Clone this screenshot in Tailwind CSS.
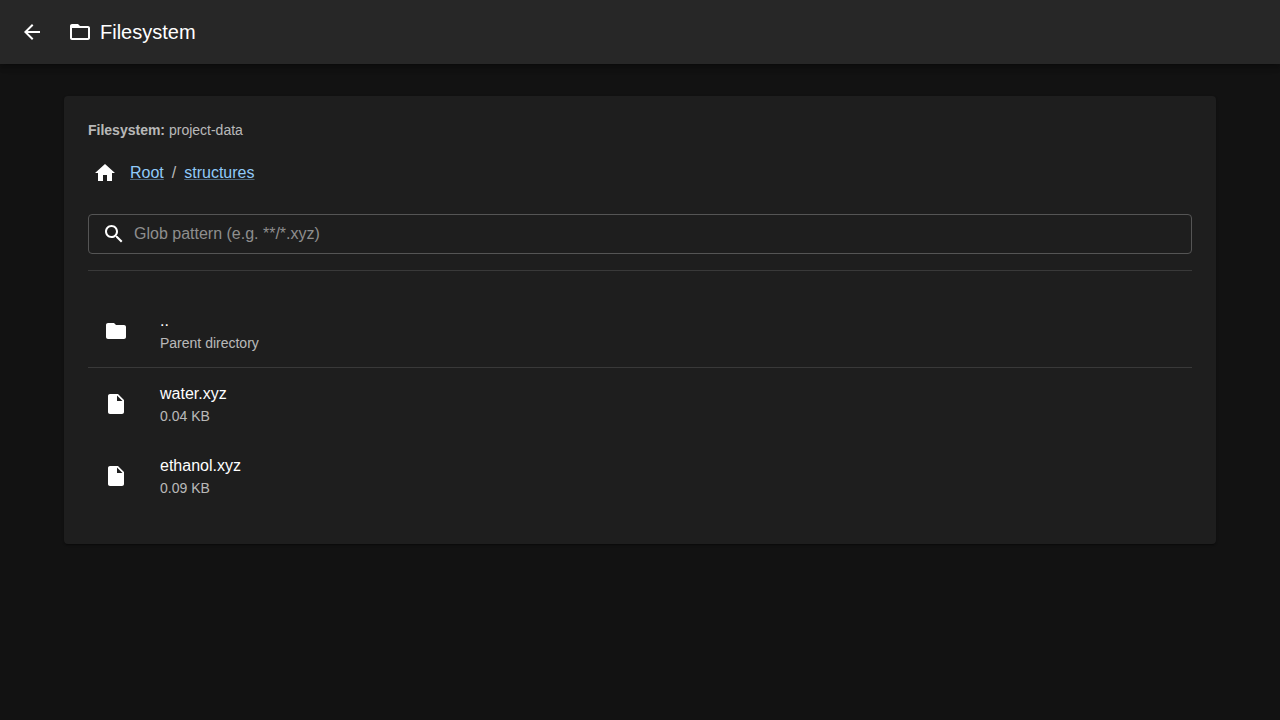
<!DOCTYPE html>
<html lang="en">
<head>
<meta charset="utf-8">
<meta name="viewport" content="width=device-width, initial-scale=1">
<title>Filesystem</title>
<script src="https://cdn.jsdelivr.net/npm/@tailwindcss/browser@4"></script>
</head>
<body class="min-h-screen bg-[#121212] font-['Liberation_Sans',Arial,sans-serif] text-base text-white">
<header class="relative flex h-16 items-center bg-[#272727] px-3 shadow-[0_2px_4px_-1px_rgba(0,0,0,0.2),0_4px_5px_0_rgba(0,0,0,0.14),0_1px_10px_0_rgba(0,0,0,0.12)]">
  <button type="button" aria-label="Back" class="mr-4 rounded-full p-2">
    <svg class="size-6 fill-current" viewBox="0 0 24 24"><path d="M20 11H7.83l5.59-5.59L12 4l-8 8 8 8 1.41-1.41L7.83 13H20v-2z"/></svg>
  </button>
  <h1 class="flex items-center gap-2 text-xl leading-8">
    <svg class="size-6 fill-current" viewBox="0 0 24 24"><path d="M20 6h-8l-2-2H4c-1.1 0-1.99.9-1.99 2L2 18c0 1.1.9 2 2 2h16c1.1 0 2-.9 2-2V8c0-1.1-.9-2-2-2zm0 12H4V8h16v10z"/></svg>
    Filesystem
  </h1>
</header>
<main class="mx-auto max-w-[1200px] px-6 py-8">
  <section class="rounded bg-[#1e1e1e] p-6 shadow-[0_2px_1px_-1px_rgba(0,0,0,0.2),0_1px_1px_0_rgba(0,0,0,0.14),0_1px_3px_0_rgba(0,0,0,0.12)]">
    <p class="mb-4 text-sm leading-5 text-white/70"><strong>Filesystem:</strong> project-data</p>
    <nav aria-label="Breadcrumb" class="mb-6 flex items-center gap-2">
      <button type="button" aria-label="Home" class="rounded-full p-[5px]">
        <svg class="size-6 fill-current" viewBox="0 0 24 24"><path d="M10 20v-6h4v6h5v-8h3L12 3 2 12h3v8z"/></svg>
      </button>
      <a href="#" class="text-[#90caf9] underline decoration-[#90caf9]/40">Root</a>
      <span class="text-white/70">/</span>
      <a href="#" class="text-[#90caf9] underline decoration-[#90caf9]/40">structures</a>
    </nav>
    <label class="flex h-10 items-center gap-2 rounded border border-[#555555] px-[13px]">
      <svg class="size-6 fill-current" viewBox="0 0 24 24"><path d="M15.5 14h-.79l-.28-.27C15.41 12.59 16 11.11 16 9.5 16 5.91 13.09 3 9.5 3S3 5.91 3 9.5 5.91 16 9.5 16c1.61 0 3.09-.59 4.23-1.57l.27.28v.79l5 4.99L20.49 19l-4.99-5zm-6 0C7.01 14 5 11.99 5 9.5S7.01 5 9.5 5 14 7.01 14 9.5 11.99 14 9.5 14z"/></svg>
      <input type="text" aria-label="Glob pattern" placeholder="Glob pattern (e.g. **/*.xyz)" class="min-w-0 flex-1 bg-transparent outline-none placeholder:text-[#8e8e8e]">
    </label>
    <hr class="my-4 border-[#393939]">
    <ul class="py-2">
      <li class="border-b border-[#393939]">
        <button type="button" class="flex w-full items-center gap-8 px-4 py-3.5 text-left">
          <svg class="size-6 fill-current" viewBox="0 0 24 24"><path d="M10 4H4c-1.1 0-1.99.9-1.99 2L2 18c0 1.1.9 2 2 2h16c1.1 0 2-.9 2-2V8c0-1.1-.9-2-2-2h-8l-2-2z"/></svg>
          <span><span class="block">..</span><span class="block text-sm leading-5 text-white/70">Parent directory</span></span>
        </button>
      </li>
      <li>
        <button type="button" class="flex w-full items-center gap-8 px-4 py-3.5 text-left">
          <svg class="size-6 fill-current" viewBox="0 0 24 24"><path d="M6 2c-1.1 0-1.99.9-1.99 2L4 20c0 1.1.89 2 1.99 2H18c1.1 0 2-.9 2-2V8l-6-6H6zm7 7V3.5L18.5 9H13z"/></svg>
          <span><span class="block">water.xyz</span><span class="block text-sm leading-5 text-white/70">0.04 KB</span></span>
        </button>
      </li>
      <li>
        <button type="button" class="flex w-full items-center gap-8 px-4 py-3.5 text-left">
          <svg class="size-6 fill-current" viewBox="0 0 24 24"><path d="M6 2c-1.1 0-1.99.9-1.99 2L4 20c0 1.1.89 2 1.99 2H18c1.1 0 2-.9 2-2V8l-6-6H6zm7 7V3.5L18.5 9H13z"/></svg>
          <span><span class="block">ethanol.xyz</span><span class="block text-sm leading-5 text-white/70">0.09 KB</span></span>
        </button>
      </li>
    </ul>
  </section>
</main>
</body>
</html>
